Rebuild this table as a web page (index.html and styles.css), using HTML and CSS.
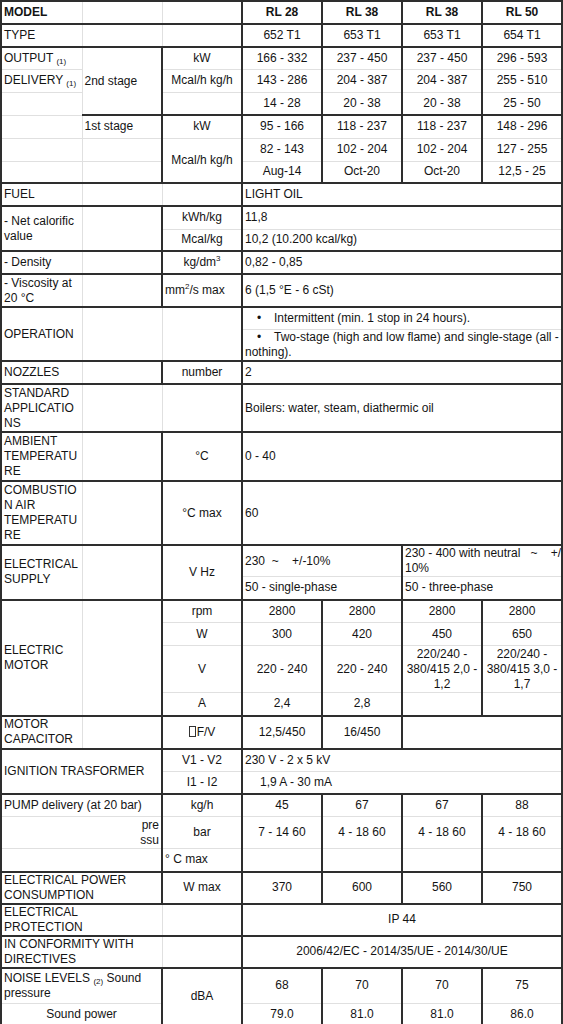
FILE: index.html
```html
<!DOCTYPE html>
<html>
<head>
<meta charset="utf-8">
<title>RL burners - technical data</title>
<link rel="stylesheet" href="styles.css">
</head>
<body>
<table class="sheet">
<colgroup><col class="ca"><col class="cb"><col class="cc"><col class="cd"><col class="cd"><col class="cd"><col class="cd"></colgroup>
<tbody>
<tr class="h23"><td class="bd">MODEL</td><td></td><td></td><td class="l c bd">RL 28</td><td class="l c bd">RL 38</td><td class="l c bd">RL 38</td><td class="l c bd">RL 50</td></tr>
<tr class="h23 g"><td>TYPE</td><td></td><td></td><td class="l c">652 T1</td><td class="l c">653 T1</td><td class="l c">653 T1</td><td class="l c">654 T1</td></tr>
<tr class="h22 g"><td>OUTPUT <sub>(1)</sub></td><td rowspan="3">2nd stage</td><td class="l c">kW</td><td class="l c">166 - 332</td><td class="l c">237 - 450</td><td class="l c">237 - 450</td><td class="l c">296 - 593</td></tr>
<tr class="h23"><td>DELIVERY <sub>(1)</sub></td><td class="l c">Mcal/h kg/h</td><td class="l c">143 - 286</td><td class="l c">204 - 387</td><td class="l c">204 - 387</td><td class="l c">255 - 510</td></tr>
<tr class="h23"><td></td><td class="l c"></td><td class="l c">14 - 28</td><td class="l c">20 - 38</td><td class="l c">20 - 38</td><td class="l c">25 - 50</td></tr>
<tr class="h23 g"><td class="nt"></td><td>1st stage</td><td class="l c">kW</td><td class="l c">95 - 166</td><td class="l c">118 - 237</td><td class="l c">118 - 237</td><td class="l c">148 - 296</td></tr>
<tr class="h23"><td></td><td></td><td rowspan="2" class="l c">Mcal/h kg/h</td><td class="l c">82 - 143</td><td class="l c">102 - 204</td><td class="l c">102 - 204</td><td class="l c">127 - 255</td></tr>
<tr class="h22"><td></td><td></td><td class="l c">Aug-14</td><td class="l c">Oct-20</td><td class="l c">Oct-20</td><td class="l c">12,5 - 25</td></tr>
<tr class="h23 g"><td>FUEL</td><td></td><td></td><td class="l" colspan="4">LIGHT OIL</td></tr>
<tr class="h23 g"><td rowspan="2">- Net calorific value</td><td rowspan="2"></td><td class="l c">kWh/kg</td><td class="l" colspan="4">11,8</td></tr>
<tr class="h22"><td class="l c">Mcal/kg</td><td class="l" colspan="4">10,2 (10.200 kcal/kg)</td></tr>
<tr class="h23 g"><td>- Density</td><td></td><td class="l c">kg/dm<sup>3</sup></td><td class="l" colspan="4">0,82 - 0,85</td></tr>
<tr class="h33 g"><td>- Viscosity at 20 °C</td><td></td><td class="l">mm<sup>2</sup>/s max</td><td class="l" colspan="4">6 (1,5 °E - 6 cSt)</td></tr>
<tr class="h22 g"><td rowspan="2">OPERATION</td><td rowspan="2"></td><td rowspan="2"></td><td class="l" colspan="4"><span class="bul">•</span>Intermittent (min. 1 stop in 24 hours).</td></tr>
<tr class="h32"><td class="l" colspan="4"><span class="nw"><span class="bul">•</span>Two-stage (high and low flame) and single-stage (all -</span><br>nothing).</td></tr>
<tr class="h23 g"><td>NOZZLES</td><td></td><td class="l c">number</td><td class="l" colspan="4">2</td></tr>
<tr class="h48 g"><td class="w">STANDARD APPLICATIONS</td><td></td><td></td><td class="l" colspan="4">Boilers: water, steam, diathermic oil</td></tr>
<tr class="h49 g"><td class="w">AMBIENT TEMPERATURE</td><td></td><td class="l c">°C</td><td class="l" colspan="4">0 - 40</td></tr>
<tr class="h64 g"><td class="w">COMBUSTION AIR TEMPERATURE</td><td></td><td class="l c">°C max</td><td class="l" colspan="4">60</td></tr>
<tr class="h31 g"><td rowspan="2">ELECTRICAL SUPPLY</td><td rowspan="2"></td><td rowspan="2" class="l c">V Hz</td><td class="l" colspan="2">230&nbsp; ~ &nbsp;&nbsp;&nbsp;+/-10%</td><td class="l" colspan="2"><span class="nw">230 - 400 with neutral &nbsp;&nbsp;~ &nbsp;&nbsp;&nbsp;+/-</span><br>10%</td></tr>
<tr class="h23"><td class="l" colspan="2">50 - single-phase</td><td class="l" colspan="2">50 - three-phase</td></tr>
<tr class="h23 g"><td rowspan="4">ELECTRIC MOTOR</td><td rowspan="4"></td><td class="l c">rpm</td><td class="l c">2800</td><td class="l c">2800</td><td class="l c">2800</td><td class="l c">2800</td></tr>
<tr class="h23"><td class="l c">W</td><td class="l c">300</td><td class="l c">420</td><td class="l c">450</td><td class="l c">650</td></tr>
<tr class="h47"><td class="l c">V</td><td class="l c">220 - 240</td><td class="l c">220 - 240</td><td class="l c">220/240 -<br>380/415 2,0 -<br>1,2</td><td class="l c">220/240 -<br>380/415 3,0 -<br>1,7</td></tr>
<tr class="h23"><td class="l c">A</td><td class="l c">2,4</td><td class="l c">2,8</td><td class="l c"></td><td class="l c"></td></tr>
<tr class="h33 g"><td>MOTOR CAPACITOR</td><td></td><td class="l c"><span class="box"></span>F/V</td><td class="l c">12,5/450</td><td class="l c">16/450</td><td class="l" colspan="2"></td></tr>
<tr class="h23 g"><td colspan="2" rowspan="2">IGNITION TRASFORMER</td><td class="l c">V1 - V2</td><td class="l" colspan="4">230 V - 2 x 5 kV</td></tr>
<tr class="h22"><td class="l c">I1 - I2</td><td class="l ind" colspan="4">1,9 A - 30 mA</td></tr>
<tr class="h23 g"><td colspan="2">PUMP delivery (at 20 bar)</td><td class="l c">kg/h</td><td class="l c">45</td><td class="l c">67</td><td class="l c">67</td><td class="l c">88</td></tr>
<tr class="h32"><td colspan="2" class="rt">pre<br>ssu</td><td class="l c">bar</td><td class="l c">7 - 14 60</td><td class="l c">4 - 18 60</td><td class="l c">4 - 18 60</td><td class="l c">4 - 18 60</td></tr>
<tr class="h23"><td colspan="2"></td><td class="l">° C max</td><td class="l"></td><td class="l"></td><td class="l"></td><td class="l"></td></tr>
<tr class="h31 g"><td colspan="2">ELECTRICAL POWER CONSUMPTION</td><td class="l c">W max</td><td class="l c">370</td><td class="l c">600</td><td class="l c">560</td><td class="l c">750</td></tr>
<tr class="h31 g"><td colspan="2">ELECTRICAL<br>PROTECTION</td><td></td><td class="l c" colspan="4">IP 44</td></tr>
<tr class="h32 g"><td colspan="2">IN CONFORMITY WITH DIRECTIVES</td><td></td><td class="l c" colspan="4">2006/42/EC - 2014/35/UE - 2014/30/UE</td></tr>
<tr class="h36 g"><td colspan="2">NOISE LEVELS <sub>(2)</sub> Sound pressure</td><td rowspan="2" class="l c">dBA</td><td class="l c">68</td><td class="l c">70</td><td class="l c">70</td><td class="l c">75</td></tr>
<tr class="h22"><td colspan="2" class="c">Sound power</td><td class="l c">79.0</td><td class="l c">81.0</td><td class="l c">81.0</td><td class="l c">86.0</td></tr>
</tbody>
</table>
</body>
</html>
```
FILE: styles.css
```css
html, body {
  margin: 0;
  padding: 0;
  background: #ffffff;
}
body {
  font-family: "Liberation Sans", Arial, sans-serif;
  font-size: 12px;
  color: #141414;
}
.sheet {
  border-collapse: collapse;
  table-layout: fixed;
  width: 562px;
  border: 2px solid #2e2e2e;
}
.ca { width: 81px; }
.cb, .cc, .cd { width: 80px; }
.sheet td {
  border: 1px solid #e0e0e0;
  padding: 0 2px;
  vertical-align: middle;
  line-height: 15px;
  overflow: hidden;
  text-align: left;
}
.sheet tr.g > td { border-top: 2px solid #2e2e2e; }
.sheet tr.g > td.nt { border-top: 1px solid #e0e0e0; }
.sheet td.l { border-left: 2px solid #2e2e2e; }
.sheet td.c { text-align: center; }
.sheet td.rt { text-align: right; }
.sheet td.ind { padding-left: 17px; }
.sheet td.w { overflow-wrap: anywhere; }
.bd { font-weight: bold; }
.nw { white-space: nowrap; }
.bul {
  display: inline-block;
  width: 17px;
  padding-left: 12px;
}
sub {
  font-size: 8px;
  line-height: 0;
  vertical-align: -2px;
}
sup {
  font-size: 8px;
  line-height: 0;
  vertical-align: 5px;
}
.box {
  display: inline-block;
  width: 5px;
  height: 9px;
  border: 1px solid #333;
  vertical-align: -1px;
  margin-right: 1px;
}
.h22 { height: 22px; }
.h23 { height: 23px; }
.h31 { height: 31px; }
.h32 { height: 32px; }
.h33 { height: 33px; }
.h36 { height: 36px; }
.h47 { height: 47px; }
.h48 { height: 48px; }
.h49 { height: 49px; }
.h64 { height: 64px; }
```
